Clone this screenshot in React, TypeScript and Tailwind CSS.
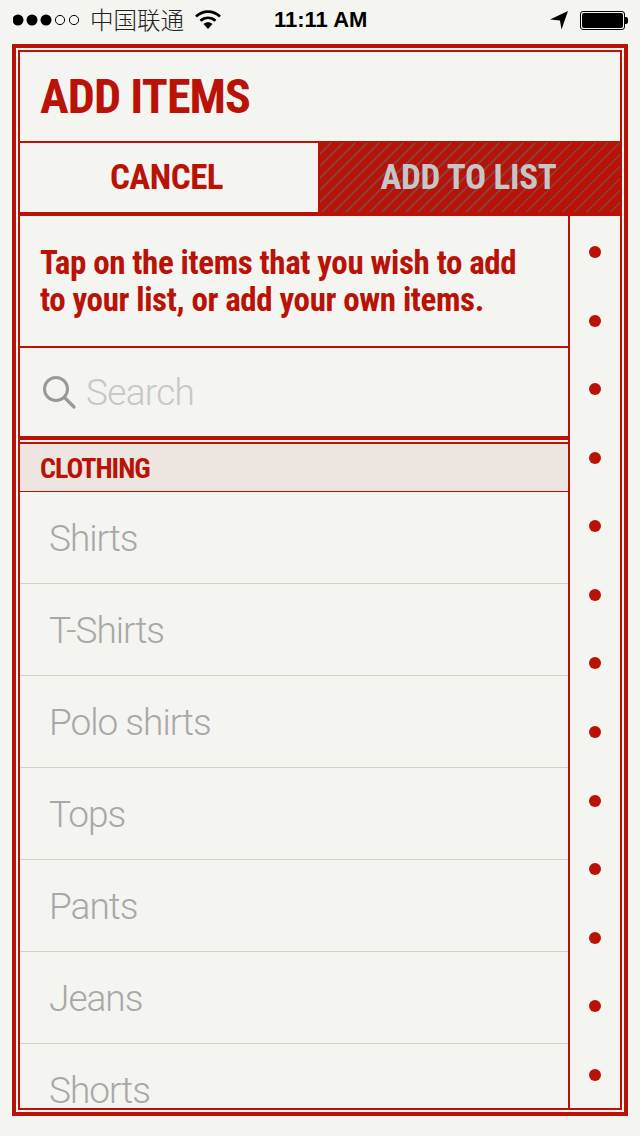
const cond = "font-['Roboto',sans-serif] font-bold font-stretch-condensed";
const light = "font-['Roboto',sans-serif] font-light";

function StatusBar() {
  return (
    <div className="h-[44px] relative flex items-center pb-[4px] text-black font-['Liberation_Sans',sans-serif]">
      <div className="flex items-center pl-[13px] gap-[2px] w-[268px]">
        <svg width="68" height="14" viewBox="0 0 68 14" className="shrink-0">
          <circle cx="5" cy="7" r="5.5" fill="#000" />
          <circle cx="19" cy="7" r="5.5" fill="#000" />
          <circle cx="33" cy="7" r="5.5" fill="#000" />
          <circle cx="47" cy="7" r="4.6" fill="none" stroke="#000" strokeWidth="1" />
          <circle cx="61" cy="7" r="4.6" fill="none" stroke="#000" strokeWidth="1" />
        </svg>
        <span className="font-['Noto_Sans_CJK_SC',sans-serif] text-[23.5px] leading-none ml-[7px] text-[#222] font-light whitespace-nowrap">中国联通</span>
        <svg width="26" height="20" viewBox="0 0 26 20" className="ml-[9px] shrink-0">
          <path d="M1 6.5 C8 0 18 0 25 6.5" fill="none" stroke="#000" strokeWidth="2.6" />
          <path d="M5.5 10.8 C10 6.8 16 6.8 20.5 10.8" fill="none" stroke="#000" strokeWidth="2.6" />
          <path d="M8.5 14 C11.5 11.5 14.5 11.5 17.5 14 L13 19 Z" fill="#000" />
        </svg>
      </div>
      <span className="text-[22px] font-bold ml-[6px] leading-none whitespace-nowrap">11:11 AM</span>
      <div className="ml-auto flex items-center pr-[12px]">
        <svg width="20" height="20" viewBox="0 0 20 20" className="mr-[11px]">
          <path d="M1 9.5 L19 1 L12.5 19.5 L11 10.5 Z" fill="#000" />
        </svg>
        <div className="w-[45px] h-[19px] border border-black rounded-[3px] p-[1px]">
          <div className="w-full h-full bg-black rounded-[2px]" />
        </div>
        <div className="w-[3px] h-[7px] bg-black rounded-r-[2px]" />
      </div>
    </div>
  );
}

const items = ["Shirts", "T-Shirts", "Polo shirts", "Tops", "Pants", "Jeans", "Shorts"];

export default function App() {
  return (
    <div className="h-[1136px] w-[640px] bg-[#f4f4f0] overflow-hidden">
      <StatusBar />
      <div className="mx-[12px] h-[1072px] border-4 border-[#b91206] p-[2px]">
        <div className="h-full border-2 border-[#b91206] flex flex-col overflow-hidden">
          <div className={`h-[91px] shrink-0 border-b-2 border-[#b91206] flex items-center pl-[20px] pt-[1px] text-[#b91206] text-[48px] tracking-[-0.9px] leading-none ${cond}`}>
            ADD ITEMS
          </div>
          <div className="h-[73px] shrink-0 flex border-b-4 border-[#b91206]">
            <div className={`w-[298px] flex items-center justify-center pb-[1px] pr-[5px] text-[#b91206] text-[35px] tracking-[-0.5px] leading-none ${cond}`}>CANCEL</div>
            <div className={`flex-1 border-l-2 border-[#b91206] flex items-center justify-center pb-[1px] pr-[3px] bg-[#b91206] bg-[repeating-linear-gradient(135deg,#b91206_0px,#b91206_6.8px,#8a4040_6.8px,#8a4040_8.5px)] text-[#c6c6c6] text-[35px] tracking-[-0.3px] leading-none ${cond}`}>
              ADD TO LIST
            </div>
          </div>
          <div className="flex-1 min-h-0 flex">
            <div className="w-[550px] shrink-0 border-r-2 border-[#b91206] flex flex-col overflow-hidden">
              <div className={`h-[132px] shrink-0 border-b-2 border-[#b91206] pl-[20px] pt-[28px] text-[#b91206] text-[33px] tracking-[-0.38px] leading-[37px] ${cond}`}>
                Tap on the items that you wish to add<br />to your list, or add your own items.
              </div>
              <div className="h-[92px] shrink-0 border-b-4 border-[#b91206] flex items-center pl-[22px]">
                <svg width="34" height="34" viewBox="0 0 34 34" className="shrink-0">
                  <circle cx="14" cy="14" r="11.5" fill="none" stroke="#999" strokeWidth="3" />
                  <path d="M22.5 22.5 L32 32" stroke="#999" strokeWidth="3.2" strokeLinecap="round" />
                </svg>
                <span className={`ml-[10px] ${light} text-[37px] tracking-[-0.7px] leading-none text-[#c7c7c9]`}>Search</span>
              </div>
              <div className={`h-[50px] shrink-0 mt-[2px] border-t-2 border-b border-[#b91206] bg-[#ede5e0] flex items-center pl-[20px] pt-[3px] text-[#b91206] text-[28px] tracking-[-1px] leading-none ${cond}`}>
                CLOTHING
              </div>
              {items.map((t) => (
                <div key={t} className={`h-[92px] shrink-0 border-b border-[#d5d0cc] flex items-center pl-[29px] pt-[2px] ${light} tracking-[-1px] text-[37px] leading-none text-[#a8a8a8]`}>
                  {t}
                </div>
              ))}
            </div>
            <div className="flex-1 flex flex-col items-center justify-between pt-[30px] pb-[27px]">
              {Array.from({ length: 13 }).map((_, i) => (
                <div key={i} className="w-[12px] h-[12px] rounded-full bg-[#b91206]" />
              ))}
            </div>
          </div>
        </div>
      </div>
    </div>
  );
}
